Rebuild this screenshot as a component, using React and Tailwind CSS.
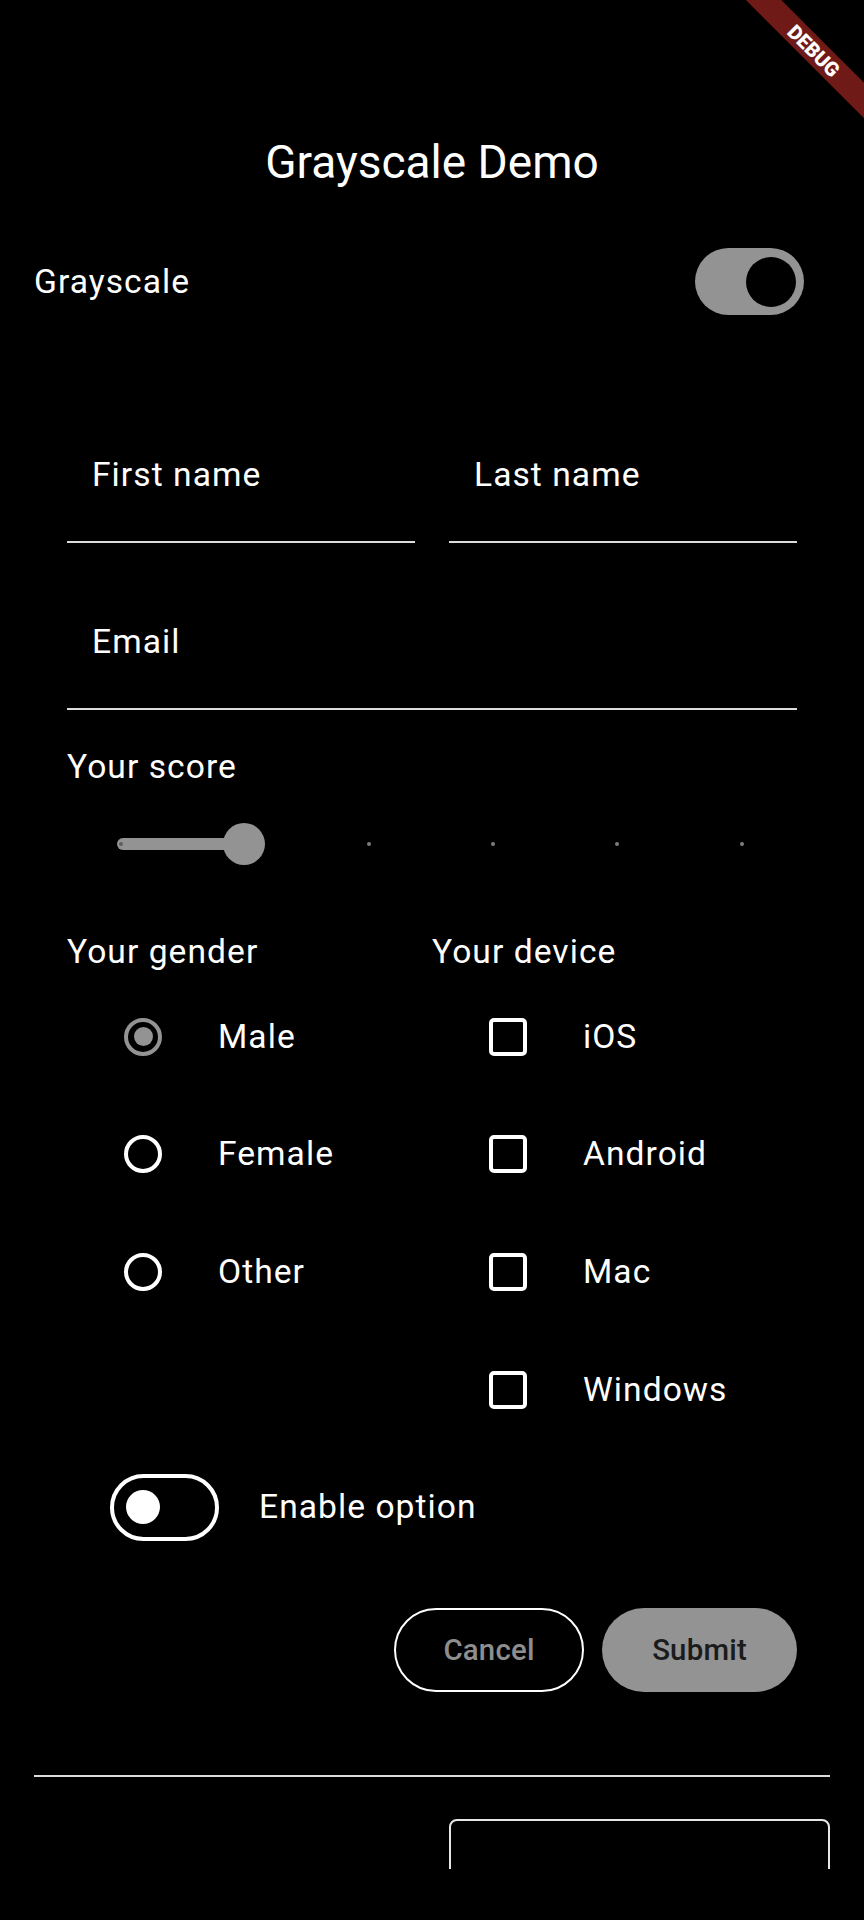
import React from 'react';

function Radio({ checked }) {
    return (
        <div
            className={`flex h-[38px] w-[38px] shrink-0 items-center justify-center rounded-full border-[4px] ${
                checked ? 'border-[#939393]' : 'border-white'
            }`}
        >
            {checked && <div className="h-[19px] w-[19px] rounded-full bg-[#939393]" />}
        </div>
    );
}

function Checkbox() {
    return <div className="h-[38px] w-[38px] shrink-0 rounded-[5px] border-[4px] border-white" />;
}

function OptionRow({ control, label }) {
    return (
        <div className="flex h-[117.6px] items-center">
            <div className="ml-[57px]">{control}</div>
            <span className="ml-[56px] text-[33.6px] leading-[40px] tracking-[1.05px]">{label}</span>
        </div>
    );
}

function TextField({ label }) {
    return (
        <div className="border-b-2 border-[#dcdcdc] pb-[46px] pl-[25px] pt-[29px]">
            <span className="block text-[33.6px] leading-[40px] tracking-[1.05px]">{label}</span>
        </div>
    );
}

function ScoreSlider() {
    const ticks = [0, 1, 2, 3, 4, 5];
    return (
        <div className="relative mt-[33px] h-[48px]">
            {/* active track */}
            <div className="absolute left-[50px] top-[18px] h-[12px] w-[127px] rounded-full bg-[#939393]" />
            {ticks.map(i => (
                <div
                    key={i}
                    className={`absolute top-[22px] h-[4px] w-[4px] rounded-full ${
                        i === 0 ? 'bg-[#5f5f5f]' : 'bg-[#7d7d7d]'
                    }`}
                    style={{ left: 52 + i * 124.1 }}
                />
            ))}
            {/* thumb */}
            <div className="absolute left-[155.5px] top-[3px] h-[42px] w-[42px] rounded-full bg-[#939393]" />
        </div>
    );
}

export default function App() {
    return (
        <div className="relative h-[1920px] w-[864px] overflow-hidden bg-black font-['Roboto',sans-serif] text-white">
            {/* Debug ribbon */}
            <div className="absolute left-[693.5px] top-[38px] flex h-[25px] w-[240px] rotate-45 items-center justify-center bg-[#6f1a16]">
                <span className="text-[20px] font-black leading-none text-white">DEBUG</span>
            </div>

            <div className="h-[1869px] overflow-hidden">
                {/* App bar */}
                <div className="pt-[135px]">
                    <h1 className="text-center text-[46px] leading-[54px]">Grayscale Demo</h1>
                </div>

                {/* Grayscale toggle */}
                <div className="mt-[59px] flex h-[67px] items-center justify-between pl-[34px] pr-[60px]">
                    <span className="text-[33.6px] leading-[40px] tracking-[1.05px]">Grayscale</span>
                    <div className="flex h-[67px] w-[109px] items-center justify-end rounded-full bg-[#939393] pr-[8px]">
                        <div className="h-[50px] w-[50px] rounded-full bg-black" />
                    </div>
                </div>

                {/* Form */}
                <div className="px-[67px]">
                    <div className="mt-[111px] grid grid-cols-2 gap-[34px]">
                        <TextField label="First name" />
                        <TextField label="Last name" />
                    </div>
                    <div className="mt-[50px]">
                        <TextField label="Email" />
                    </div>

                    <p className="mt-[37px] text-[33.6px] leading-[40px] tracking-[1.05px]">Your score</p>
                    <ScoreSlider />

                    <div className="mt-[64px] grid grid-cols-2">
                        <div>
                            <p className="text-[33.6px] leading-[40px] tracking-[1.05px]">Your gender</p>
                            <div className="mt-[6px]">
                                <OptionRow control={<Radio checked />} label="Male" />
                                <OptionRow control={<Radio />} label="Female" />
                                <OptionRow control={<Radio />} label="Other" />
                            </div>
                        </div>
                        <div>
                            <p className="text-[33.6px] leading-[40px] tracking-[1.05px]">Your device</p>
                            <div className="mt-[6px]">
                                <OptionRow control={<Checkbox />} label="iOS" />
                                <OptionRow control={<Checkbox />} label="Android" />
                                <OptionRow control={<Checkbox />} label="Mac" />
                                <OptionRow control={<Checkbox />} label="Windows" />
                            </div>
                        </div>
                    </div>

                    {/* Enable option */}
                    <div className="flex h-[117.6px] items-center">
                        <div className="ml-[43px] flex h-[67px] w-[109px] items-center rounded-full border-[4px] border-white pl-[12px]">
                            <div className="h-[34px] w-[34px] rounded-full bg-white" />
                        </div>
                        <span className="ml-[40px] text-[33.6px] leading-[40px] tracking-[1.05px]">Enable option</span>
                    </div>

                    {/* Actions */}
                    <div className="mt-[42px] flex justify-end gap-[18px]">
                        <button className="flex h-[84px] w-[190px] items-center justify-center rounded-full border-2 border-white text-[29.4px] font-medium tracking-[0.2px] text-[#8e8e8e]">
                            Cancel
                        </button>
                        <button className="flex h-[84px] w-[195px] items-center justify-center rounded-full bg-[#939393] text-[29.4px] font-medium tracking-[0.2px] text-[#1b1b1b]">
                            Submit
                        </button>
                    </div>
                </div>

                {/* Divider */}
                <div className="mx-[34px] mt-[83px] h-[2px] bg-[#dcdcdc]" />

                {/* Card peeking from below */}
                <div className="ml-auto mr-[34px] mt-[42px] h-[120px] w-[381px] rounded-[8px] border-2 border-[#e6e6e6]" />
            </div>
        </div>
    );
}
